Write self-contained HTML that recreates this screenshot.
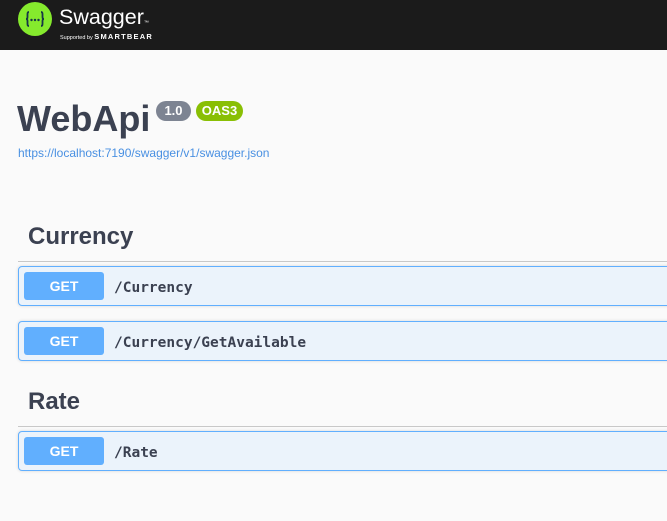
<!DOCTYPE html>
<html><head><style>
body{margin:0;width:667px;height:521px;background:#fafafa;font-family:"Liberation Sans",sans-serif;overflow:hidden;position:relative}
.top{position:absolute;left:0;top:0;width:667px;height:50px;background:#1b1b1b}
.abs{position:absolute}
.h{color:#3b4151;font-weight:bold;white-space:nowrap}
.line{position:absolute;left:18px;right:0;height:1px;background:#c8c8c8}
.op{position:absolute;left:18px;width:660px;height:38px;border:1px solid #61affe;border-radius:4px;background:#ebf3fb;box-shadow:0 0 3px rgba(0,0,0,.15)}
.get{position:absolute;left:5px;top:5px;width:80px;height:28px;background:#61affe;border-radius:3px;color:#fff;font-weight:bold;font-size:14px;text-align:center;line-height:28px}
.p{position:absolute;left:95px;top:2px;line-height:38px;font-family:"DejaVu Sans Mono","Liberation Mono",monospace;font-weight:bold;font-size:14.5px;color:#3b4151}
</style></head><body>
<div class="top">
<svg class="abs" style="left:17px;top:1px" width="36" height="36"><circle cx="18" cy="18" r="17" fill="#85ea2d"/>
<path d="M12 11 Q10.5 11 10.5 13 V16 Q10.5 18 9 18 Q10.5 18 10.5 20 V23 Q10.5 25 12 25 M24 11 Q25.5 11 25.5 13 V16 Q25.5 18 27 18 Q25.5 18 25.5 20 V23 Q25.5 25 24 25" fill="none" stroke="#173647" stroke-width="1.8"/>
<circle cx="14.5" cy="19" r="1.2" fill="#173647"/><circle cx="18" cy="19" r="1.2" fill="#173647"/><circle cx="21.5" cy="19" r="1.2" fill="#173647"/></svg>
<div class="abs" style="left:59px;top:5px;color:#fff;font-size:21.5px">Swagger<span style="font-size:5px">™</span></div>
<div class="abs" style="left:60px;top:32px;color:#fff;font-size:5.5px;white-space:nowrap">Supported by <span style="font-size:7.5px;font-weight:bold;letter-spacing:1.2px">SMARTBEAR</span></div>
</div>
<div class="abs h" style="left:17px;top:98px;font-size:36px">WebApi</div>
<div class="abs" style="left:156px;top:101px;width:35px;height:20px;border-radius:10px;background:#7d8492;color:#fff;font-weight:bold;font-size:13px;text-align:center;line-height:20px">1.0</div>
<div class="abs" style="left:196px;top:101px;width:47px;height:20px;border-radius:10px;background:#89bf04;color:#fff;font-weight:bold;font-size:13px;text-align:center;line-height:20px">OAS3</div>
<div class="abs" style="left:18px;top:146px;font-size:12px;color:#4990e2">https://localhost:7190/swagger/v1/swagger.json</div>
<div class="abs h" style="left:28px;top:223px;font-size:24px">Currency</div>
<div class="line" style="top:261px"></div>
<div class="op" style="top:266px"><div class="get">GET</div><div class="p">/Currency</div></div>
<div class="op" style="top:321px"><div class="get">GET</div><div class="p">/Currency/GetAvailable</div></div>
<div class="abs h" style="left:28px;top:388px;font-size:24px">Rate</div>
<div class="line" style="top:426px"></div>
<div class="op" style="top:431px"><div class="get">GET</div><div class="p">/Rate</div></div>
</body></html>
